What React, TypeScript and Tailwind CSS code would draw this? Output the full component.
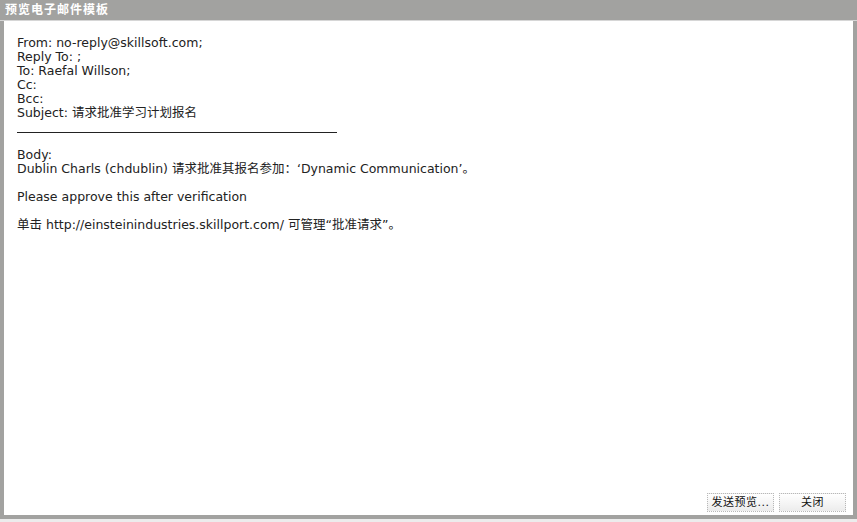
const LINES_HEAD = [
  "From: no-reply@skillsoft.com;",
  "Reply To: ;",
  "To: Raefal Willson;",
  "Cc:",
  "Bcc:",
  "Subject: 请求批准学习计划报名",
];

function DialogButton({ label }: { label: string }) {
  return (
    <button
      type="button"
      className="h-[19px] w-[67px] border border-dotted border-[#b8b8b8] bg-gradient-to-b from-[#ffffff] to-[#ececec] text-[11px] leading-[17px] tracking-[0.5px] text-[#111]"
    >
      {label}
    </button>
  );
}

export default function App() {
  return (
    <div
      className="h-[522px] w-[857px] bg-[#ececec] text-[#222]"
      style={{ fontFamily: '"DejaVu Sans", "Noto Sans CJK SC", sans-serif' }}
    >
      <div className="flex h-[519px] flex-col bg-[#a2a2a0]">
        <div className="flex h-[21px] items-center border-b border-[#d6d6d6] px-[5px] text-[12px] font-bold tracking-[1px] text-white">
          预览电子邮件模板
        </div>
        <div className="mb-[4px] ml-[4px] mr-[4px] flex flex-1 flex-col bg-white">
          <div className="flex-1 pl-[13px] pt-[15px] text-[12.5px] leading-[14px]">
            {LINES_HEAD.map((line) => (
              <div key={line}>{line}</div>
            ))}
            <div className="mt-[12px] h-px w-[320px] bg-[#222]" />
            <div className="mt-[15px]">Body:</div>
            <div>Dublin Charls (chdublin) 请求批准其报名参加：‘Dynamic Communication’。</div>
            <div className="mt-[14px]">Please approve this after verification</div>
            <div className="mt-[14px]">单击 http://einsteinindustries.skillport.com/ 可管理“批准请求”。</div>
          </div>
          <div className="flex justify-end gap-[5px] pb-[3px] pr-[7px]">
            <DialogButton label="发送预览..." />
            <DialogButton label="关闭" />
          </div>
        </div>
      </div>
    </div>
  );
}
